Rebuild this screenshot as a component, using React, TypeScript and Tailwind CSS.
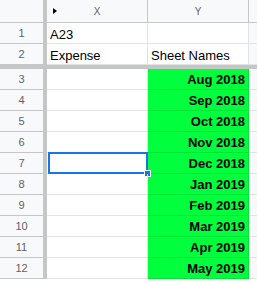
import React from "react";

const months = [
  "Aug 2018",
  "Sep 2018",
  "Oct 2018",
  "Nov 2018",
  "Dec 2018",
  "Jan 2019",
  "Feb 2019",
  "Mar 2019",
  "Apr 2019",
  "May 2019",
];

function RowHead({ n }: { n: number }) {
  return (
    <div className="w-[43px] shrink-0 h-full bg-[#f8f9fa] border-b border-[#c4c7c5] flex items-center justify-center text-[11px] text-[#5f6368]">
      {n}
    </div>
  );
}

function Bar() {
  return <div className="w-[4px] shrink-0 h-full bg-[#c4c7c5]" />;
}

export default function App() {
  return (
    <div
      className="w-[257px] h-[282px] overflow-hidden bg-white flex flex-col"
      style={{ fontFamily: '"Liberation Sans", Arial, sans-serif' }}
    >
      {/* header */}
      <div className="h-[23px] flex shrink-0">
        <div className="w-[43px] shrink-0 h-full bg-[#f8f9fa] border-b border-[#c4c7c5]" />
        <Bar />
        <div className="relative w-[101px] shrink-0 h-full bg-[#f8f9fa] border-b border-r border-[#c4c7c5] flex items-center justify-center text-[10px] text-[#5f6368]">
          <span className="absolute left-[6px] top-[8px] w-0 h-0 border-y-[3.5px] border-y-transparent border-l-[4px] border-l-black" />
          X
        </div>
        <div className="w-[101px] shrink-0 h-full bg-[#f8f9fa] border-b border-r border-[#c4c7c5] flex items-center justify-center text-[10px] text-[#5f6368]">
          Y
        </div>
        <div className="flex-1 h-full bg-[#f8f9fa] border-b border-[#c4c7c5]" />
      </div>

      {[
        ["A23", ""],
        ["Expense", "Sheet Names"],
      ].map((r, i) => (
        <div key={i} className="h-[21px] flex shrink-0">
          <RowHead n={i + 1} />
          <Bar />
          <div className="w-[101px] shrink-0 h-full border-b border-r border-[#e2e3e3] flex items-end pb-[2px] pl-[3px] text-[13px] text-black leading-none">
            {r[0]}
          </div>
          <div className="w-[101px] shrink-0 h-full border-b border-r border-[#e2e3e3] flex items-end pb-[2px] pl-[3px] text-[13px] text-black leading-none">
            {r[1]}
          </div>
          <div className="flex-1 h-full bg-[#f8f9fa] border-b border-[#e2e3e3]" />
        </div>
      ))}

      <div className="h-[4px] shrink-0 bg-[#c4c7c5]" />

      {months.map((m, i) => (
        <div key={m} className="h-[21px] flex shrink-0">
          <RowHead n={i + 3} />
          <Bar />
          <div className="relative w-[101px] shrink-0 h-full border-b border-r border-[#e2e3e3]">
            {i === 4 && (
              <div className="absolute left-[1px] top-[-1px] w-[100px] h-[22px] border-2 border-[#1a73e8]">
                <div className="absolute right-[-5px] bottom-[-5px] w-[7px] h-[7px] bg-[#1a73e8] border border-white" />
              </div>
            )}
          </div>
          <div className="w-[101px] shrink-0 h-full bg-[#00ff3c] border-b border-r border-black/10 flex items-end justify-end pb-[3px] pr-[3px] text-[13px] font-bold text-black leading-none">
            {m}
          </div>
          <div className="flex-1 h-full bg-[#f8f9fa] border-b border-[#e2e3e3]" />
        </div>
      ))}
    </div>
  );
}
